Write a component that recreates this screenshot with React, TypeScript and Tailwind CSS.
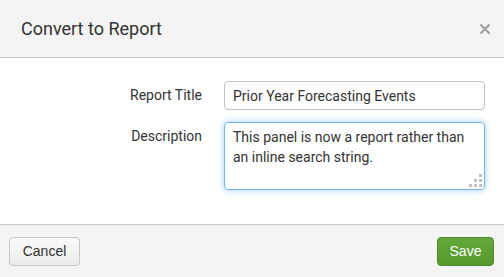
export default function App() {
  return (
    <div className="w-[504px] h-[277px] bg-white flex flex-col overflow-hidden font-['Roboto',sans-serif] text-[#333]">
      {/* Header */}
      <div className="h-[58px] shrink-0 bg-[#f4f4f4] border-b border-[#c9c9c9] flex items-center justify-between pl-[21px] pr-[13px]">
        <h3 className="text-[18px] leading-none text-[#333]">Convert to Report</h3>
        <button className="w-[12px] h-[12px] flex items-center justify-center text-[#a0a0a0]">
          <svg width="12" height="12" viewBox="0 0 12 12">
            <path d="M1.5 1.5 L10.5 10.5 M10.5 1.5 L1.5 10.5" stroke="currentColor" strokeWidth="2.2" strokeLinecap="butt" />
          </svg>
        </button>
      </div>

      {/* Body */}
      <div className="flex-1 pt-[23px] pr-[19px]">
        <div className="grid grid-cols-[202px_1fr] gap-x-[22px] gap-y-[12px] items-start text-[14px]">
          <label className="text-right leading-[29px]">Report Title</label>
          <input
            defaultValue="Prior Year Forecasting Events"
            className="h-[29px] w-full rounded-[4px] border border-[#c3c3c3] px-[8px] text-[14px] text-[#333] outline-none"
          />
          <label className="text-right leading-[29px]">Description</label>
          <div className="relative">
            <textarea
              defaultValue="This panel is now a report rather than an inline search string."
              className="block h-[68px] w-full rounded-[4px] border border-[#6fb5ef] shadow-[0_0_6px_rgba(80,160,240,0.55)] px-[8px] pt-[4px] text-[14px] leading-[20px] text-[#333] outline-none resize-none"
            />
            {/* resize grip */}
            <svg className="absolute right-[3px] bottom-[3px] pointer-events-none" width="13" height="13" viewBox="0 0 13 13">
              <g fill="#c2c2c2">
                <rect x="10" y="0" width="3" height="3" />
                <rect x="5" y="5" width="3" height="3" />
                <rect x="10" y="5" width="3" height="3" />
                <rect x="0" y="10" width="3" height="3" />
                <rect x="5" y="10" width="3" height="3" />
                <rect x="10" y="10" width="3" height="3" />
              </g>
            </svg>
          </div>
        </div>
      </div>

      {/* Footer */}
      <div className="h-[53px] shrink-0 bg-[#f4f4f4] border-t border-[#c9c9c9] flex items-start justify-between pt-[12px] pl-[9px] pr-[10px] font-['Liberation_Sans',sans-serif] text-[14px]">
        <button className="h-[29px] w-[71px] rounded-[4px] border border-[#c7c7c7] bg-gradient-to-b from-[#fafafa] to-[#ececec] text-[#333]">
          Cancel
        </button>
        <button className="h-[29px] w-[57px] rounded-[4px] border border-[#4f8a2a] bg-gradient-to-b from-[#63a83a] to-[#56982f] text-white">
          Save
        </button>
      </div>
    </div>
  );
}
